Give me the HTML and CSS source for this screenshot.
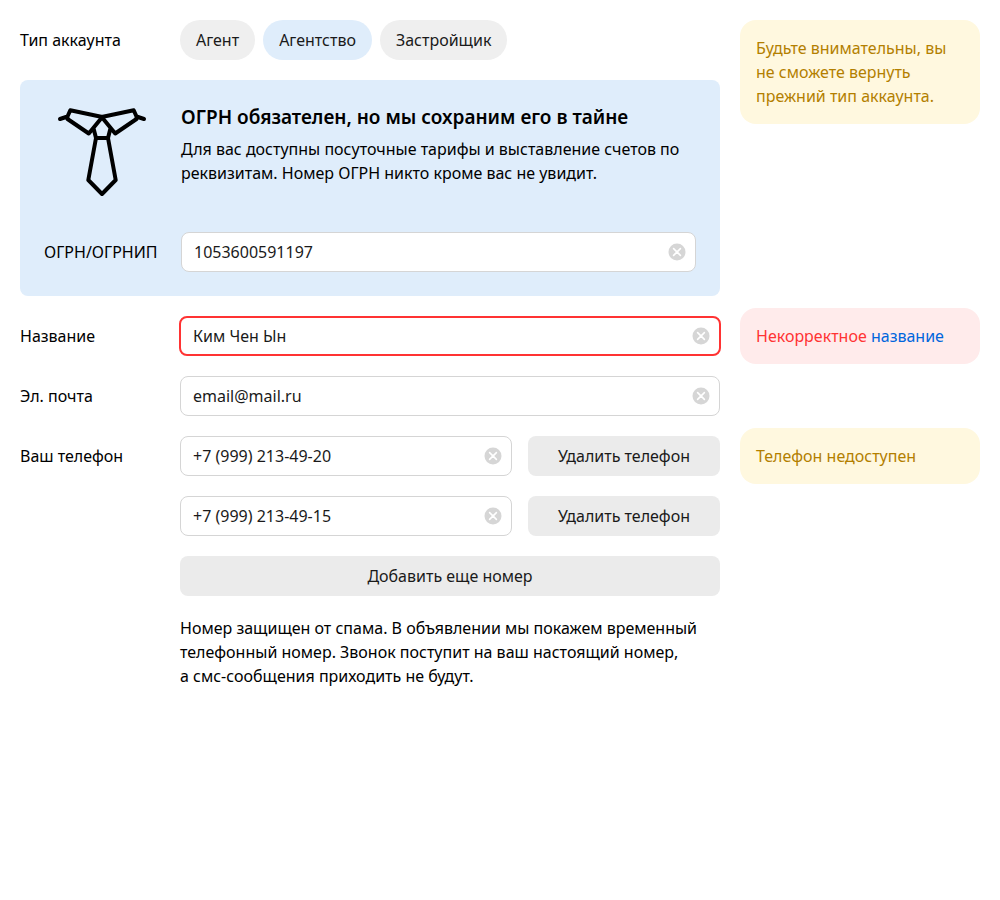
FILE: index.html
```html
<!DOCTYPE html>
<html lang="ru">
<head>
<meta charset="utf-8">
<meta name="viewport" content="width=device-width, initial-scale=1">
<title>Настройки аккаунта</title>
<link rel="stylesheet" href="styles.css">
</head>
<body>
<svg class="sprite" aria-hidden="true">
  <symbol id="clear" viewBox="0 0 18 18">
    <circle cx="9" cy="9" r="8.5" fill="#d6d6d6"/>
    <path d="M5.6 5.6l6.8 6.8M12.4 5.6l-6.8 6.8" stroke="#fff" stroke-width="1.6" stroke-linecap="round"/>
  </symbol>
</svg>
<form class="form">
  <div class="row">
    <span class="label" id="type-label">Тип аккаунта</span>
    <div class="pills" role="group" aria-labelledby="type-label">
      <button class="pill" type="button">Агент</button>
      <button class="pill pill-active" type="button" aria-pressed="true">Агентство</button>
      <button class="pill" type="button">Застройщик</button>
    </div>
  </div>
  <aside class="notice notice-warning notice-tall">Будьте внимательны, вы не&nbsp;сможете вернуть прежний тип аккаунта.</aside>

  <section class="panel">
    <svg class="tie" viewBox="0 0 96 96" aria-hidden="true">
      <path d="M6 15l7.5-2.5L16.300 6.300 48.300 13 34.800 29.500 13.500 15v-2.500M90 15l-7.500-2.500L79.700 6.300 47.700 13 61.200 29.500 82.500 15v-2.500M39.700 25L42 34h12l2.300-9M42 34l-7.700 42L48 90l13.700-14L54 34"/>
    </svg>
    <div class="panel-text">
      <h2 class="panel-title">ОГРН обязателен, но мы сохраним его в тайне</h2>
      <p class="text">Для вас доступны посуточные тарифы и выставление счетов по реквизитам. Номер ОГРН никто кроме вас не увидит.</p>
    </div>
    <label class="label" for="ogrn">ОГРН/ОГРНИП</label>
    <div class="field">
      <input class="input" id="ogrn" type="text" value="1053600591197">
      <button class="clear" type="button" aria-label="Очистить"><svg class="clear-icon"><use href="#clear"/></svg></button>
    </div>
  </section>

  <div class="row">
    <label class="label" for="name">Название</label>
    <div class="field">
      <input class="input input-error" id="name" type="text" value="Ким Чен Ын">
      <button class="clear" type="button" aria-label="Очистить"><svg class="clear-icon"><use href="#clear"/></svg></button>
    </div>
  </div>
  <aside class="notice notice-error">Некорректное <a class="link" href="#name">название</a></aside>

  <div class="row">
    <label class="label" for="email">Эл. почта</label>
    <div class="field">
      <input class="input" id="email" type="text" value="email@mail.ru">
      <button class="clear" type="button" aria-label="Очистить"><svg class="clear-icon"><use href="#clear"/></svg></button>
    </div>
  </div>

  <div class="row">
    <label class="label" for="phone1">Ваш телефон</label>
    <div class="phones">
      <div class="phone">
        <div class="field">
          <input class="input" id="phone1" type="text" value="+7 (999) 213-49-20">
          <button class="clear" type="button" aria-label="Очистить"><svg class="clear-icon"><use href="#clear"/></svg></button>
        </div>
        <button class="button" type="button">Удалить телефон</button>
      </div>
      <div class="phone">
        <div class="field">
          <input class="input" type="text" aria-label="Второй телефон" value="+7 (999) 213-49-15">
          <button class="clear" type="button" aria-label="Очистить"><svg class="clear-icon"><use href="#clear"/></svg></button>
        </div>
        <button class="button" type="button">Удалить телефон</button>
      </div>
      <button class="button" type="button">Добавить еще номер</button>
      <p class="text">Номер защищен от спама. В объявлении мы покажем временный телефонный номер. Звонок поступит на ваш настоящий номер, а&nbsp;смс-сообщения приходить не будут.</p>
    </div>
  </div>
  <aside class="notice notice-warning">Телефон недоступен</aside>
</form>
</body>
</html>
```
FILE: styles.css
```css
* { box-sizing: border-box; }

body {
  margin: 0;
  padding: 20px;
  background: #fff;
  color: #000;
  font: 16px/24px "Noto Sans", sans-serif;
}

button, input {
  margin: 0;
  font: inherit;
  color: #1a1a1a;
}

button { cursor: pointer; }

.sprite {
  position: absolute;
  width: 0;
  height: 0;
}

.form {
  display: grid;
  grid-template-columns: minmax(0, 1fr) 240px;
  gap: 20px;
  align-items: start;
}

.row {
  grid-column: 1;
  display: grid;
  grid-template-columns: 160px minmax(0, 1fr);
}

.label { line-height: 40px; }

.pills {
  display: flex;
  gap: 8px;
}

.pill {
  height: 40px;
  padding: 0 16px;
  border: 0;
  border-radius: 20px;
  background: #efefef;
}

.pill-active { background: #dfedfb; }

.panel {
  grid-column: 1;
  display: grid;
  grid-template-columns: 116px minmax(0, 1fr);
  gap: 32px 21px;
  padding: 24px;
  border-radius: 8px;
  background: #dfedfb;
}

.tie {
  width: 96px;
  height: 96px;
  justify-self: center;
  fill: none;
  stroke: #000;
  stroke-width: 4;
  stroke-linecap: round;
  stroke-linejoin: round;
}

.panel-title {
  margin: 0 0 7px;
  font-size: 19px;
  font-weight: 600;
  line-height: 26px;
}

.text { margin: 0; }

.field {
  display: grid;
  align-items: center;
}

.input {
  grid-area: 1 / 1;
  width: 100%;
  height: 40px;
  padding: 0 40px 0 12px;
  border: 1px solid #d5d5d5;
  border-radius: 8px;
  background: #fff;
  outline: 0;
}

.input-error {
  width: calc(100% + 2px);
  margin: 0 -1px;
  border: 2px solid #f33;
}

.clear {
  grid-area: 1 / 1;
  justify-self: end;
  display: flex;
  margin-right: 10px;
  padding: 0;
  border: 0;
  background: none;
}

.clear-icon {
  width: 18px;
  height: 18px;
}

.phones {
  display: grid;
  gap: 20px;
}

.phone {
  display: grid;
  grid-template-columns: minmax(0, 1fr) 192px;
  gap: 16px;
}

.button {
  height: 40px;
  padding: 0 16px;
  border: 0;
  border-radius: 8px;
  background: #ebebeb;
}

.notice {
  grid-column: 2;
  margin: -8px 0;
  padding: 16px;
  border-radius: 16px;
}

.notice-tall {
  grid-row: 1 / span 2;
  margin: 0;
}

.notice-warning {
  background: #fff8df;
  color: #b37f00;
}

.notice-error {
  background: #ffebeb;
  color: #f33;
}

.link {
  color: #06d;
  text-decoration: none;
}
```
